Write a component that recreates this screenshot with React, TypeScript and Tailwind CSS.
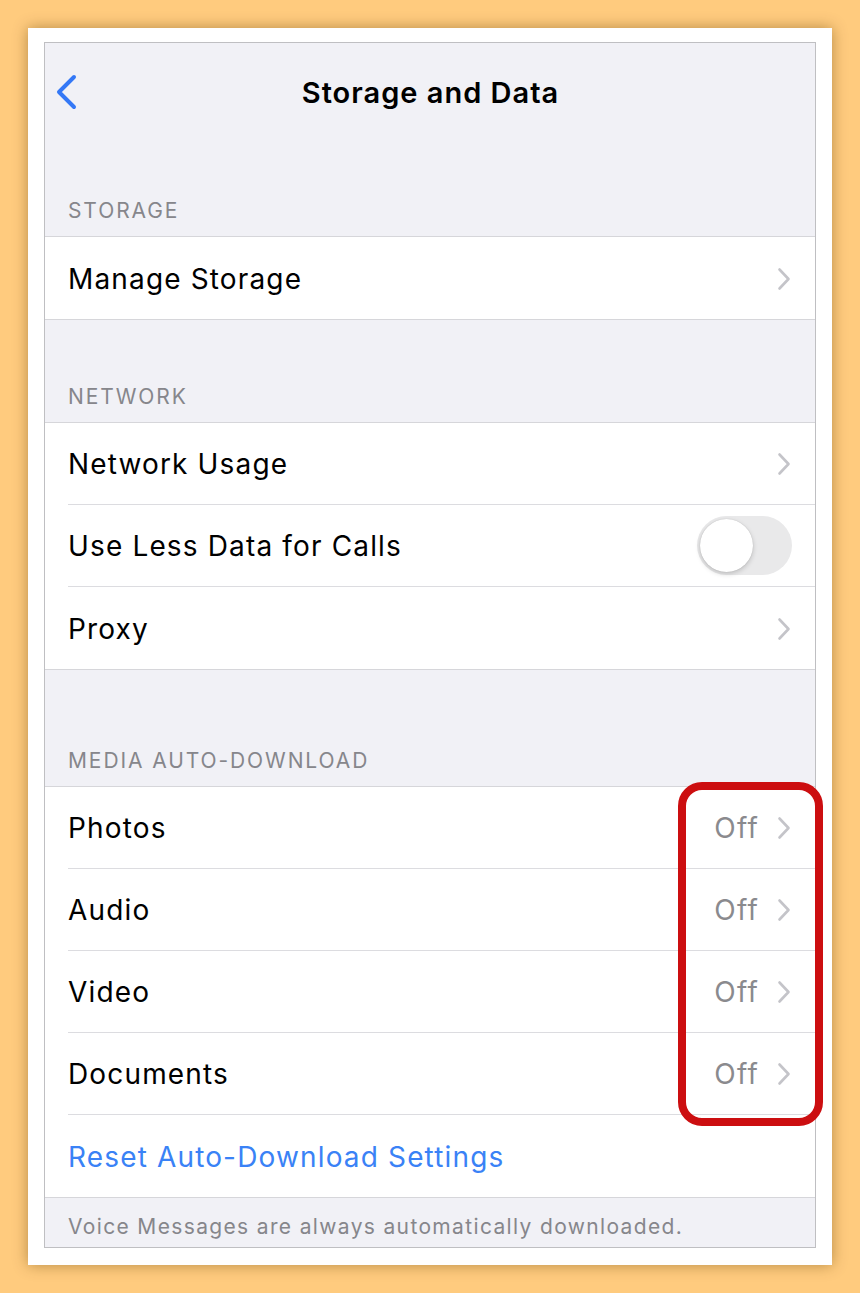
import React from "react";

const font = { fontFamily: "Inter, 'Noto Sans', 'Liberation Sans', sans-serif" };

function Chevron() {
  return (
    <svg width="14" height="24" viewBox="0 0 14 24" className="shrink-0">
      <path d="M2.5 2.5 L11.5 12 L2.5 21.5" fill="none" stroke="#c4c4c9" strokeWidth="2.6" strokeLinecap="round" strokeLinejoin="round" />
    </svg>
  );
}

function Row({ label, value, chevron = true, last = false, toggle = false, blue = false }: { label: string; value?: string; chevron?: boolean; last?: boolean; toggle?: boolean; blue?: boolean }) {
  return (
    <div className="pl-[23px] bg-white">
      <div className={`h-[82px] flex items-center pr-[24px] pt-[2px] ${last ? "" : "border-b border-[#dcdce0]"}`}>
        <span className={`flex-1 text-[28px] tracking-[1.15px] ${blue ? "text-[#3a82f6]" : "text-black"}`}>{label}</span>
        {value && <span className="text-[28px] tracking-[1.2px] text-[#8a8a8e] mr-[18px]">{value}</span>}
        {toggle && (
          <div className="w-[95px] h-[59px] rounded-full bg-[#e9e9ea] p-[3px] mr-[-1px] mt-[-2px] flex items-center">
            <div className="w-[53px] h-[53px] rounded-full bg-white shadow-[0_2px_5px_rgba(0,0,0,0.18),0_0_1px_rgba(0,0,0,0.2)]" />
          </div>
        )}
        {chevron && !toggle && <Chevron />}
      </div>
    </div>
  );
}

function Header({ text, h }: { text: string; h: string }) {
  return (
    <div className={`${h} flex items-end pl-[23px] pb-[12px]`}>
      <span className="text-[21px] leading-[26px] text-[#86868b] tracking-[1.9px]">{text}</span>
    </div>
  );
}

export default function App() {
  return (
    <div className="w-[860px] h-[1293px] bg-[#ffcb7e] pt-[28px] pl-[28px]" style={font}>
      <div className="w-[804px] h-[1237px] bg-white pt-[14px] pl-[16px] shadow-[0_0_14px_rgba(90,60,0,0.45)]">
        <div className="w-[772px] h-[1206px] border border-[#bfbfc2] bg-[#f1f1f6] flex flex-col relative">
          {/* nav */}
          <div className="h-[100px] flex items-center justify-center relative shrink-0">
            <svg width="26" height="40" viewBox="0 0 26 40" className="absolute left-[10px] top-[31px]">
              <path d="M19 3 L4 18 L19 33" fill="none" stroke="#3478f6" strokeWidth="4" strokeLinecap="round" strokeLinejoin="round" />
            </svg>
            <span className="text-[29px] font-semibold text-black tracking-[1px] pl-[1px]">Storage and Data</span>
          </div>

          <Header text="STORAGE" h="h-[94px]" />
          <div className="border-y border-[#d6d6da]">
            <Row label="Manage Storage" last />
          </div>

          <Header text="NETWORK" h="h-[103px]" />
          <div className="border-y border-[#d6d6da]">
            <Row label="Network Usage" />
            <Row label="Use Less Data for Calls" toggle />
            <Row label="Proxy" last />
          </div>

          <Header text="MEDIA AUTO-DOWNLOAD" h="h-[117px]" />
          <div className="border-y border-[#d6d6da]">
            <Row label="Photos" value="Off" />
            <Row label="Audio" value="Off" />
            <Row label="Video" value="Off" />
            <Row label="Documents" value="Off" />
            <Row label="Reset Auto-Download Settings" chevron={false} blue last />
          </div>

          <div className="h-[50px] flex items-center pl-[23px] pt-[9px]">
            <span className="text-[21px] tracking-[1.35px] text-[#86868b]">Voice Messages are always automatically downloaded.</span>
          </div>

          {/* highlight */}
          <div className="absolute left-[633px] top-[739px] w-[145px] h-[344px] border-[8px] border-[#cc0e10] rounded-[24px] pointer-events-none" />
        </div>
      </div>
    </div>
  );
}
